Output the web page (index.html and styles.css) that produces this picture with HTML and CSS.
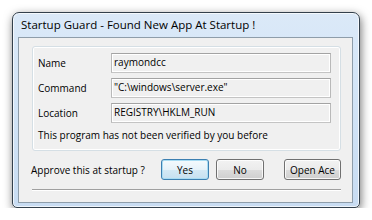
FILE: index.html
```html
<!DOCTYPE html>
<html lang="en">
<head>
  <meta charset="UTF-8" />
  <title>Startup Guard</title>
  <link rel="stylesheet" href="styles.css">
</head>
<body>
  <div class="window">
    <!-- Title bar -->
    <div class="window-header">Startup Guard - Found New App At Startup !</div>

    <!-- Client area -->
    <div class="window-content">
      <div class="panel">
        <div class="form-row">
          <label>Name</label>
          <div class="field">raymondcc</div>
        </div>
        <div class="form-row">
          <label>Command</label>
          <div class="field">"C:\windows\server.exe"</div>
        </div>
        <div class="form-row">
          <label>Location</label>
          <div class="field">REGISTRY\HKLM_RUN</div>
        </div>
        <div class="note">This program has not been verified by you before</div>
      </div>

      <div class="actions">
        <span class="question">Approve this at startup ?</span>
        <button class="btn btn-default">Yes</button>
        <button class="btn">No</button>
        <button class="btn btn-wide">Open Ace</button>
      </div>

      <div class="separator"></div>
    </div>
  </div>
</body>
</html>
```

FILE: styles.css
```css
/* Reset */
* {
  box-sizing: border-box;
}
body {
  margin: 0;
  background-color: #ffffff;
  font-family: "Open Sans", "Noto Sans", sans-serif;
  font-size: 10px;
  color: #000000;
}

/* Aero style window frame */
.window {
  margin: 12px 0 0 12px;
  width: 348px;
  height: 196px;
  border: 1px solid #33404c;
  border-radius: 7px 7px 5px 5px;
  background: linear-gradient(to bottom, #dbe9f8 0%, #d3e5f7 40%, #c8dcf2 100%);
  box-shadow: 1px 3px 10px rgba(0, 0, 0, 0.55), inset 0 0 0 1px rgba(255, 255, 255, 0.7);
  padding: 0 6px 4px 5px;
  display: flex;
  flex-direction: column;
}

.window-header {
  height: 24px;
  padding: 4px 0 0 3px;
  font-size: 11.5px;
  color: #000000;
  white-space: nowrap;
}

/* Client area */
.window-content {
  flex: 1;
  background-color: #f0f0f0;
  border: 1px solid #8e9daa;
  padding: 8px 11px 0 13px;
  display: flex;
  flex-direction: column;
}

/* Group box without caption */
.panel {
  height: 105px;
  border: 1px solid #d5dfe5;
  border-radius: 3px;
  box-shadow: inset 0 0 0 1px #ffffff;
  padding: 6px 9px 0 5px;
}

.form-row {
  display: flex;
  align-items: center;
  height: 20px;
  margin-bottom: 5px;
}
.form-row label {
  width: 73px;
}
.field {
  flex: 1;
  height: 20px;
  line-height: 17px;
  padding-left: 2px;
  border: 1px solid #abadb3;
  border-color: #a3a3a3 #b9b9b9 #c4c4c4 #b9b9b9;
  box-shadow: inset 0 0 0 1px #ffffff;
  background-color: #f0f0f0;
  white-space: nowrap;
  overflow: hidden;
}

.note {
  margin-top: 2px;
}

/* Bottom row */
.actions {
  display: flex;
  align-items: center;
  margin-top: 8px;
  margin-left: -1px;
}
.question {
  width: 130px;
}
.btn {
  width: 48px;
  height: 21px;
  margin-right: 7px;
  padding: 0;
  font-family: inherit;
  font-size: 10px;
  color: #000000;
  border: 1px solid #707070;
  border-radius: 3px;
  background: linear-gradient(to bottom, #f2f2f2 0%, #ebebeb 50%, #dddddd 51%, #cfcfcf 100%);
  box-shadow: inset 0 0 0 1px rgba(255, 255, 255, 0.8);
}
.btn-default {
  border-color: #3c7fb1;
  background: linear-gradient(to bottom, #f4fafd 0%, #e6f2f9 50%, #d4e9f5 51%, #c6e0f0 100%);
  box-shadow: inset 0 0 0 1px #a8dcf3;
}
.btn-wide {
  width: 57px;
  margin-left: 13px;
  margin-right: 0;
}

.separator {
  margin-top: 9px;
  height: 2px;
  border-top: 1px solid #a0a0a0;
  border-bottom: 1px solid #ffffff;
}
```
